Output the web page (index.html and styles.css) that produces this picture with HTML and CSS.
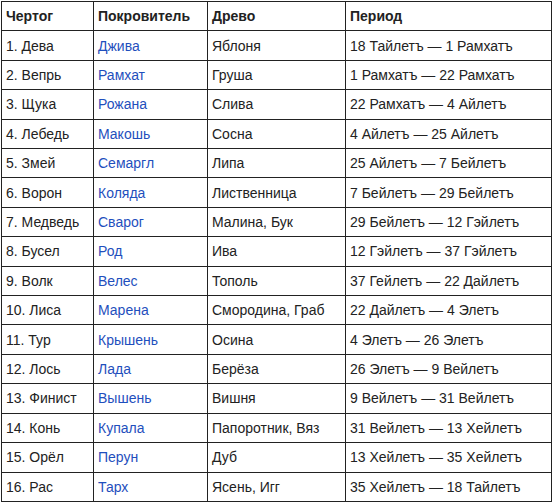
FILE: index.html
```html
<!DOCTYPE html>
<html lang="ru">
<head>
<meta charset="utf-8">
<link rel="stylesheet" href="styles.css">
</head>
<body>
<table class="grid">
<colgroup><col class="c1"><col class="c2"><col class="c3"><col class="c4"></colgroup>
<tbody>
<tr><th>Чертог</th><th>Покровитель</th><th>Древо</th><th>Период</th></tr>
<tr><td>1. Дева</td><td><a class="lnk">Джива</a></td><td>Яблоня</td><td>18 Тайлетъ — 1 Рамхатъ</td></tr>
<tr><td>2. Вепрь</td><td><a class="lnk">Рамхат</a></td><td>Груша</td><td>1 Рамхатъ — 22 Рамхатъ</td></tr>
<tr><td>3. Щука</td><td><a class="lnk">Рожана</a></td><td>Слива</td><td>22 Рамхатъ — 4 Айлетъ</td></tr>
<tr><td>4. Лебедь</td><td><a class="lnk">Макошь</a></td><td>Сосна</td><td>4 Айлетъ — 25 Айлетъ</td></tr>
<tr><td>5. Змей</td><td><a class="lnk">Семаргл</a></td><td>Липа</td><td>25 Айлетъ — 7 Бейлетъ</td></tr>
<tr><td>6. Ворон</td><td><a class="lnk">Коляда</a></td><td>Лиственница</td><td>7 Бейлетъ — 29 Бейлетъ</td></tr>
<tr><td>7. Медведь</td><td><a class="lnk">Сварог</a></td><td>Малина, Бук</td><td>29 Бейлетъ — 12 Гэйлетъ</td></tr>
<tr><td>8. Бусел</td><td><a class="lnk">Род</a></td><td>Ива</td><td>12 Гэйлетъ — 37 Гэйлетъ</td></tr>
<tr><td>9. Волк</td><td><a class="lnk">Велес</a></td><td>Тополь</td><td>37 Гейлетъ — 22 Дайлетъ</td></tr>
<tr><td>10. Лиса</td><td><a class="lnk">Марена</a></td><td>Смородина, Граб</td><td>22 Дайлетъ — 4 Элетъ</td></tr>
<tr><td>11. Тур</td><td><a class="lnk">Крышень</a></td><td>Осина</td><td>4 Элетъ — 26 Элетъ</td></tr>
<tr><td>12. Лось</td><td><a class="lnk">Лада</a></td><td>Берёза</td><td>26 Элетъ — 9 Вейлетъ</td></tr>
<tr><td>13. Финист</td><td><a class="lnk">Вышень</a></td><td>Вишня</td><td>9 Вейлетъ — 31 Вейлетъ</td></tr>
<tr><td>14. Конь</td><td><a class="lnk">Купала</a></td><td>Папоротник, Вяз</td><td>31 Вейлетъ — 13 Хейлетъ</td></tr>
<tr><td>15. Орёл</td><td><a class="lnk">Перун</a></td><td>Дуб</td><td>13 Хейлетъ — 35 Хейлетъ</td></tr>
<tr><td>16. Рас</td><td><a class="lnk">Тарх</a></td><td>Ясень, Игг</td><td>35 Хейлетъ — 18 Тайлетъ</td></tr>
</tbody>
</table>
</body>
</html>
```
FILE: styles.css
```css
html, body {
  margin: 0;
  padding: 0;
  background: #ffffff;
}
body {
  padding: 1px 0 0 1px;
  font-family: "Liberation Sans", Arial, sans-serif;
  font-size: 14px;
  color: #222222;
}
.grid {
  border-collapse: collapse;
  table-layout: fixed;
  width: 551px;
  height: 501px;
}
.grid tr {
  height: 29.4px;
}
.c1 { width: 92px; }
.c2 { width: 114px; }
.c3 { width: 138px; }
.c4 { width: 206px; }
.grid th,
.grid td {
  border: 1px solid #222222;
  padding: 0 4px;
  text-align: left;
  vertical-align: middle;
  white-space: nowrap;
  overflow: hidden;
}
.grid th {
  font-weight: bold;
}
.lnk {
  color: #1f4fbd;
  text-decoration: none;
}
```
